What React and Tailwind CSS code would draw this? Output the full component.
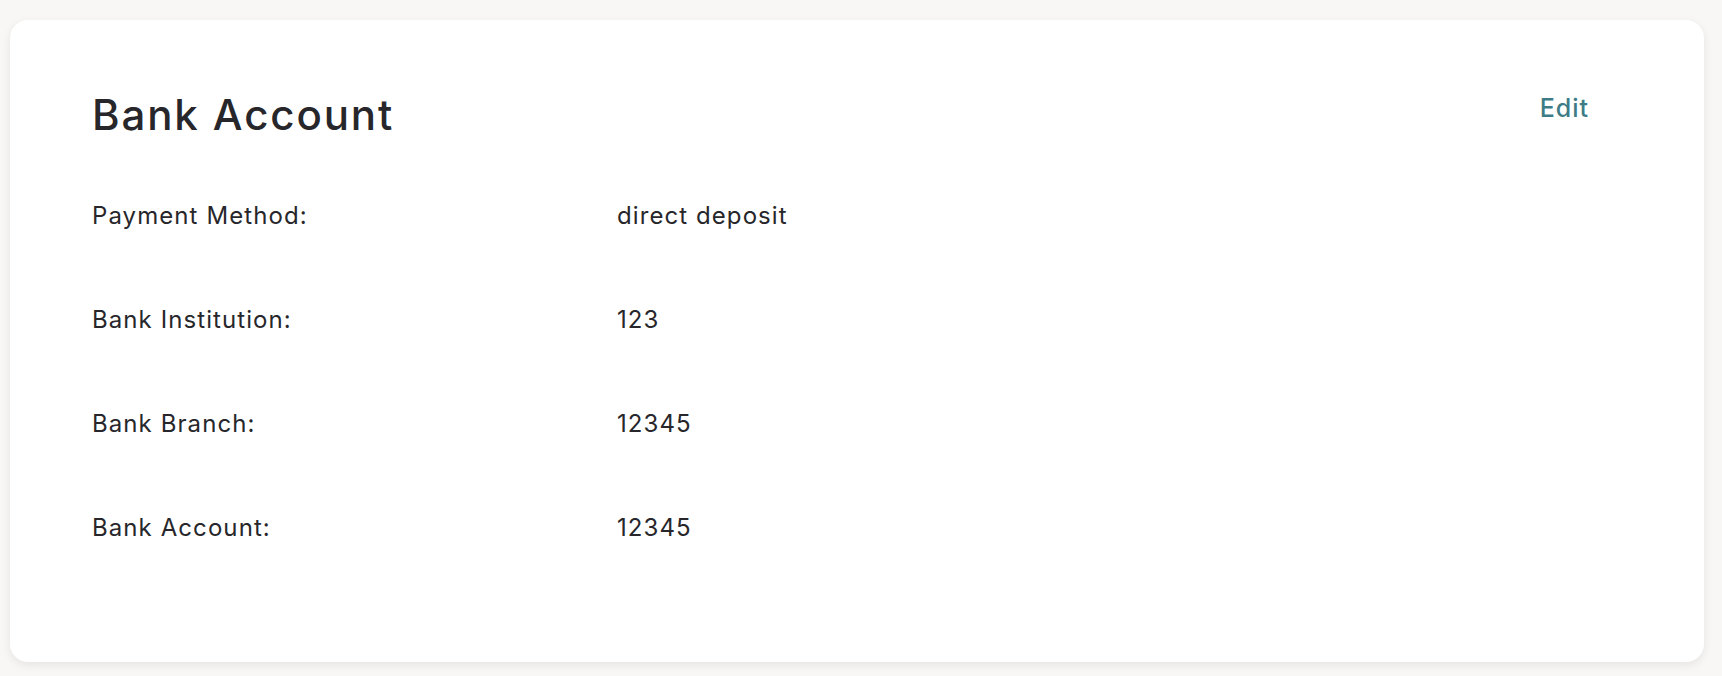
import React from 'react';

const rows = [
    { label: 'Payment Method:', value: 'direct deposit' },
    { label: 'Bank Institution:', value: '123' },
    { label: 'Bank Branch:', value: '12345' },
    { label: 'Bank Account:', value: '12345' },
];

function App() {
    return (
        <div className="min-h-screen bg-[#f8f7f5] pl-[10px] pr-[18px] pt-[20px] pb-[14px]" style={{ fontFamily: 'Inter, "Open Sans", sans-serif' }}>
            <div className="bg-white rounded-[18px] shadow-[0_3px_10px_rgba(0,0,0,0.08)] pl-[82px] pr-[115px] pt-[70px] pb-[118px] text-[#27272b]">
                <div className="flex items-start justify-between">
                    <h2 className="text-[42px] leading-[50px] tracking-[0.045em] font-medium">Bank Account</h2>
                    <button className="mt-[2px] text-[25px] leading-[32px] tracking-[0.04em] font-medium text-[#3d7c86]">
                        Edit
                    </button>
                </div>
                <div className="mt-[60px] flex flex-col gap-[72px]">
                    {rows.map((row) => (
                        <div key={row.label} className="flex text-[24px] leading-[32px] tracking-[0.045em]">
                            <div className="w-[525px]">{row.label}</div>
                            <div>{row.value}</div>
                        </div>
                    ))}
                </div>
            </div>
        </div>
    );
}

export default App;
